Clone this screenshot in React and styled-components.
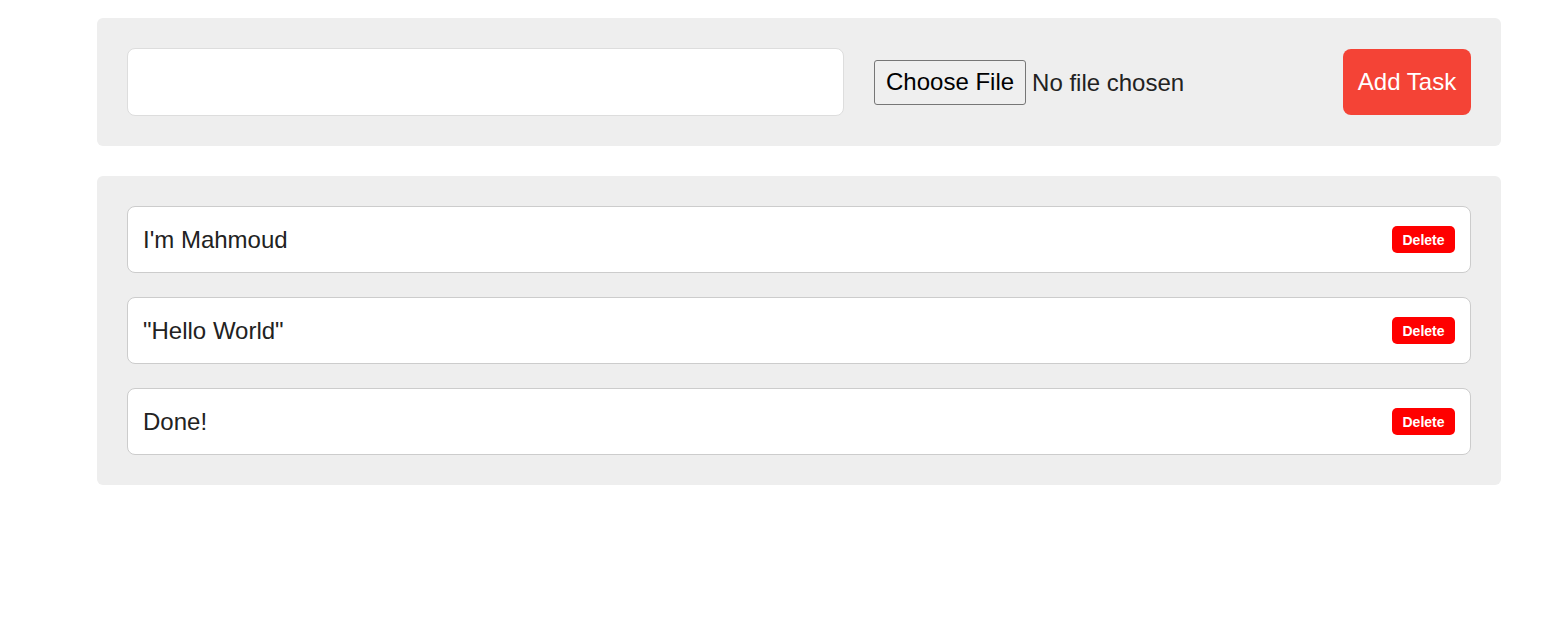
import React, { useState } from 'react'
import { styled, createGlobalStyle } from 'styled-components'

const GlobalStyle = createGlobalStyle`
    body {
        margin: 0;
        background: #fff;
        font-family: "Liberation Sans", Arial, sans-serif;
    }
`

const initialTasks = ["I'm Mahmoud", '"Hello World"', 'Done!']

const App = () => {
    const [tasks, setTasks] = useState(initialTasks)
    const [text, setText] = useState('')

    const addTask = () => {
        if (!text.trim()) return
        setTasks([...tasks, text])
        setText('')
    }

    return (
        <Page>
            <GlobalStyle />
            <Form>
                <TaskInput
                    autoFocus
                    value={text}
                    onChange={(e) => setText(e.target.value)}
                />
                <FileInput type="file" />
                <AddButton onClick={addTask}>Add Task</AddButton>
            </Form>
            <TaskList>
                {tasks.map((task, i) => (
                    <TaskItem key={i}>
                        <TaskText>{task}</TaskText>
                        <DeleteButton onClick={() => setTasks(tasks.filter((_, j) => j !== i))}>
                            Delete
                        </DeleteButton>
                    </TaskItem>
                ))}
            </TaskList>
        </Page>
    )
}

const Page = styled.div`
    width: 1404px;
    margin: 18px 0 0 97px;
    display: flex;
    flex-direction: column;
    gap: 30px;
`

const Panel = styled.div`
    background: #eeeeee;
    border-radius: 6px;
    padding: 30px;
`

const Form = styled(Panel)`
    display: flex;
    align-items: center;
    gap: 30px;
    height: 68px;
`

const TaskInput = styled.input`
    flex: 0 0 717px;
    box-sizing: border-box;
    height: 68px;
    margin: 0;
    padding: 0 15px;
    border: 1px solid #dddddd;
    border-radius: 8px;
    background: #fff;
    font-family: "Liberation Sans", Arial, sans-serif;
    font-size: 24px;
    caret-color: #000;
    outline: none;
`

const FileInput = styled.input`
    flex: 1;
    min-width: 0;
    margin: 0;
    font-family: "Liberation Sans", Arial, sans-serif;
    font-size: 24px;
    color: #222;

    &::file-selector-button {
        font-family: "Liberation Sans", Arial, sans-serif;
        font-size: 24px;
        color: #000;
        height: 45px;
        padding: 0 11px;
        margin-right: 6px;
        background: #efefef;
        border: 1px solid #767676;
        border-radius: 3px;
    }
`

const AddButton = styled.button`
    flex: 0 0 128px;
    height: 66px;
    padding: 0;
    border: none;
    border-radius: 8px;
    background: #f44336;
    color: #fff;
    font-family: "Liberation Sans", Arial, sans-serif;
    font-size: 24px;
    cursor: pointer;
`

const TaskList = styled(Panel)`
    display: flex;
    flex-direction: column;
    gap: 24px;
`

const TaskItem = styled.div`
    display: flex;
    align-items: center;
    justify-content: space-between;
    box-sizing: border-box;
    height: 67px;
    padding: 0 15px;
    background: #fff;
    border: 1px solid #cccccc;
    border-radius: 8px;
`

const TaskText = styled.span`
    font-size: 24px;
    color: #222;
`

const DeleteButton = styled.button`
    width: 63px;
    height: 27px;
    padding: 0;
    border: none;
    border-radius: 5px;
    background: #ff0000;
    color: #fff;
    font-family: "Liberation Sans", Arial, sans-serif;
    font-size: 14px;
    font-weight: bold;
    cursor: pointer;
`

export default App
